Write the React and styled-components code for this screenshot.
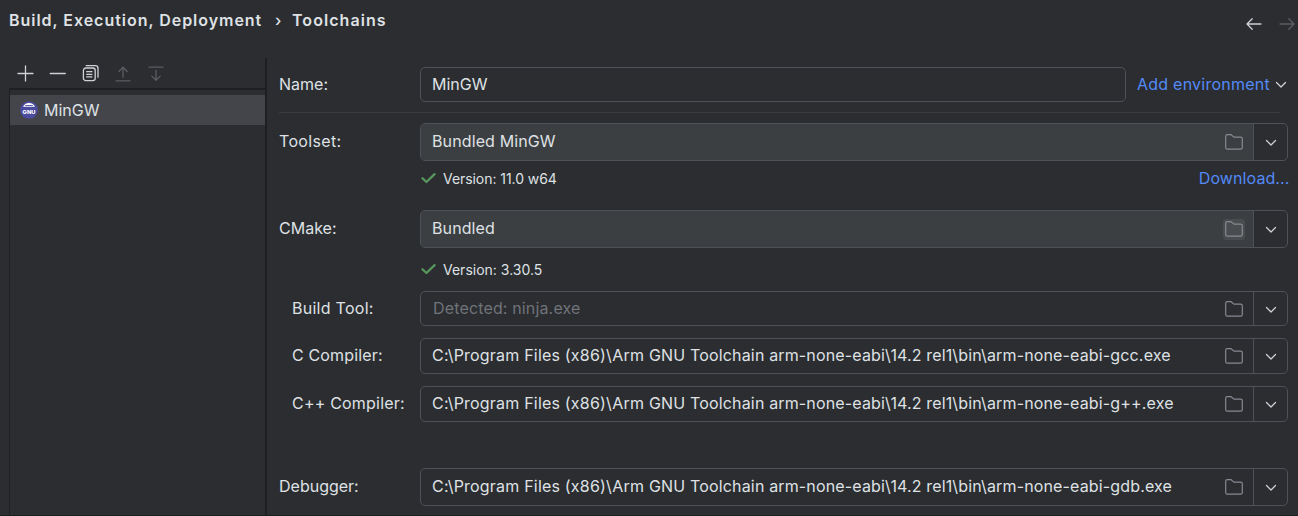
import React from "react";
import styled, { createGlobalStyle } from "styled-components";

const Global = createGlobalStyle`
  *, *::before, *::after { box-sizing: border-box; }
  body { margin: 0; background: #2b2d30; }
`;

const Page = styled.div`
  width: 1298px;
  height: 516px;
  overflow: hidden;
  display: flex;
  flex-direction: column;
  background: #2b2d30;
  color: #dfe1e5;
  font: 400 16px/20px Inter, sans-serif;
  white-space: pre;
  border-bottom: 1px solid #1e1f22;
  svg { display: block; flex: none; }
`;

const Header = styled.header`
  height: 58px;
  flex: none;
  display: flex;
  justify-content: space-between;
  padding: 10px 3px 0 9px;
`;

const Crumbs = styled.div`
  display: flex;
  font-weight: 600;
`;

const Crumb = styled.span`
  letter-spacing: ${(p) => p.$ls || 0}px;
  width: ${(p) => p.$w}px;
`;

const Separator = styled.span`
  width: 17px;
  font-weight: 500;
`;

const Nav = styled.div`
  display: flex;
  gap: 17px;
  padding-top: 6px;
`;

const Body = styled.div`
  flex: 1;
  display: flex;
  min-height: 0;
`;

const Sidebar = styled.aside`
  width: 267px;
  flex: none;
  display: flex;
  flex-direction: column;
  border-right: 2px solid #1e1f22;
  padding-left: 9px;
`;

const Toolbar = styled.div`
  height: 30px;
  flex: none;
  display: flex;
  align-items: center;
  gap: 12.7px;
  padding-left: 6px;
`;

const List = styled.div`
  flex: 1;
  border-top: 2px solid #1e1f22;
  border-left: 1px solid #1e1f22;
  padding-top: 5px;
`;

const ListItem = styled.div`
  height: 30px;
  display: flex;
  align-items: center;
  gap: 6px;
  padding-left: 10px;
  background: #43454a;
`;

const Form = styled.main`
  flex: 1;
  display: flex;
  flex-direction: column;
  padding: 9px 10px 0 12px;
`;

const Row = styled.div`
  display: flex;
  flex: none;
  height: ${(p) => p.$h}px;
  margin-top: ${(p) => p.$mt || 0}px;
`;

const Label = styled.div`
  width: 141px;
  flex: none;
  display: flex;
  align-items: center;
  padding-left: ${(p) => (p.$indent ? 13 : 0)}px;
`;

const Text = styled.span`
  letter-spacing: ${(p) => p.$ls || 0}px;
  padding-bottom: ${(p) => p.$up || 0}px;
`;

const Field = styled.div`
  width: ${(p) => p.$w || 868}px;
  display: flex;
  border: 1px solid #4e5157;
  border-radius: 5px;
  overflow: hidden;
`;

const Value = styled.div`
  flex: 1;
  display: flex;
  align-items: center;
  justify-content: space-between;
  padding: 0 8px 0 ${(p) => (p.$hint ? 12 : 11)}px;
  background: ${(p) => (p.$filled ? "#3c3f41" : "transparent")};
  color: ${(p) => (p.$hint ? "#6f737a" : "inherit")};
`;

const Browse = styled.span`
  width: 22px;
  height: 21px;
  display: flex;
  align-items: center;
  justify-content: center;
  border-radius: 4px;
  background: ${(p) => (p.$hover ? "#4a4d4f" : "transparent")};
`;

const Drop = styled.div`
  width: 34px;
  display: flex;
  align-items: center;
  justify-content: center;
  padding-top: 2px;
  border-left: 1px solid #4e5157;
`;

const Link = styled.div`
  display: flex;
  align-items: center;
  gap: 5px;
  color: #548af7;
  margin-left: ${(p) => p.$ml || 0}px;
`;

const Rule = styled.div`
  flex: none;
  width: 1001px;
  height: 1px;
  margin-top: 10px;
  background: #3b3d41;
`;

const Status = styled(Row)`
  width: 1010.5px;
  padding-left: 142px;
  justify-content: space-between;
  align-items: center;
`;

const Check = styled.div`
  display: flex;
  align-items: center;
  gap: 7px;
  font-size: 14px;
`;

const Chevron = () => (
  <svg width="12" height="8" viewBox="0 0 12 8" fill="none" stroke="#ced0d6" strokeWidth="1.3" strokeLinecap="round" strokeLinejoin="round">
    <path d="M1.5 1.5L6 6L10.5 1.5" />
  </svg>
);

const Folder = () => (
  <svg width="18" height="16" viewBox="0 0 18 16" fill="none" stroke="#868a91" strokeWidth="1.2" strokeLinejoin="round">
    <path d="M.7 2.3Q.7.7 2.3.7H6.1L8.9 3.1H15.7Q17.3 3.1 17.3 4.7V13.5Q17.3 15.1 15.7 15.1H2.3Q.7 15.1.7 13.5Z" />
  </svg>
);

const Tick = () => (
  <svg width="15" height="12" viewBox="0 0 15 12" fill="none" stroke="#57965c" strokeWidth="2.3" strokeLinecap="round" strokeLinejoin="round">
    <path d="M1.5 5.2L5.4 9L13.6 1.2" />
  </svg>
);

const Arrow = ({ color, flip }) => (
  <svg width="16" height="16" viewBox="0 0 16 16" fill="none" stroke={color} strokeWidth="1.3" strokeLinecap="round" strokeLinejoin="round">
    <path d={flip ? "M1 8H15M9.8 2.8L15 8L9.8 13.2" : "M15 8H1M6.2 2.8L1 8L6.2 13.2"} />
  </svg>
);

const ToolIcon = ({ d, color = "#ced0d6", children }) => (
  <svg width="20" height="20" viewBox="0 0 20 20" fill="none" stroke={color} strokeWidth="1.3" strokeLinecap="round" strokeLinejoin="round">
    <path d={d} />
    {children}
  </svg>
);

const Gnu = () => (
  <svg width="18" height="18" viewBox="0 0 18 18">
    <circle cx="9" cy="9" r="8.8" fill="#4b4ba0" />
    <path d="M3 5.8Q4.6 2 9 2Q13.4 2 15 5.8Z" fill="#fff" />
    <path d="M5.2 4.5H12.8" stroke="#4b4ba0" strokeWidth=".9" />
    <text x="9" y="12.9" textAnchor="middle" textLength="12.8" lengthAdjust="spacingAndGlyphs" fontFamily="Inter, sans-serif" fontWeight="800" fontSize="5.4" fill="#fff">GNU</text>
  </svg>
);

function Combo({ children, filled, hint, hover, up, ls }) {
  return (
    <Field>
      <Value $filled={filled} $hint={hint}>
        <Text $ls={ls} $up={up}>{children}</Text>
        <Browse $hover={hover}><Folder /></Browse>
      </Value>
      <Drop><Chevron /></Drop>
    </Field>
  );
}

const ArmTool = ({ exe }) => (
  <>
    <Text $ls={0.2}>{"C:\\Program Files (x86)\\Arm GNU "}</Text>
    <Text $ls={0.148}>{"Toolchain arm-none-eabi\\14.2 rel1\\bin\\arm-none-eabi-" + exe}</Text>
  </>
);

export default function App() {
  return (
    <Page>
      <Global />
      <Header>
        <Crumbs>
          <Crumb $w={266} $ls={0.97}>Build, Execution, Deployment</Crumb>
          <Separator>›</Separator>
          <Crumb $w={120} $ls={1.05}>Toolchains</Crumb>
        </Crumbs>
        <Nav>
          <Arrow color="#ced0d6" />
          <Arrow color="#5a5d63" flip />
        </Nav>
      </Header>
      <Body>
        <Sidebar>
          <Toolbar>
            <ToolIcon d="M3 10.5H18M10.5 3V18" />
            <ToolIcon d="M2.3 10.5H17.3" />
            <ToolIcon d="M6.2 2.6H15.4Q18 2.6 18 5.2V14.2">
              <rect x="3.4" y="5" width="11.8" height="12.6" rx="2.4" />
              <path d="M6.7 8.7H11.9M6.7 11.3H11.9M6.7 13.9H11.9" />
            </ToolIcon>
            <ToolIcon color="#5a5d63" d="M10 14.2V4.3M5.8 8.5L10 4.3L14.2 8.5M3 17.8H17" />
            <ToolIcon color="#5a5d63" d="M10 7.3V17.3M5.8 13.1L10 17.3L14.2 13.1M3 4.2H17" />
          </Toolbar>
          <List>
            <ListItem>
              <Gnu />
              <Text>MinGW</Text>
            </ListItem>
          </List>
        </Sidebar>
        <Form>
          <Row $h={35}>
            <Label><Text $up={1}>Name:</Text></Label>
            <Field $w={706}><Value><Text $up={1}>MinGW</Text></Value></Field>
            <Link $ml={11}><Text $up={1} $ls={0.24}>Add environment</Text><Chevron /></Link>
          </Row>
          <Rule />
          <Row $h={38} $mt={10}>
            <Label><Text $up={2} $ls={0.33}>Toolset:</Text></Label>
            <Combo filled up={2} ls={0.12}>Bundled MinGW</Combo>
          </Row>
          <Status $h={20} $mt={8}>
            <Check><Tick /><Text $ls={-0.06}>Version: 11.0 w64</Text></Check>
            <Link><Text $up={2} $ls={0.1}>Download...</Text></Link>
          </Status>
          <Row $h={38} $mt={21}>
            <Label><Text $up={2}>CMake:</Text></Label>
            <Combo filled hover up={2} ls={0.1}>Bundled</Combo>
          </Row>
          <Status $h={20} $mt={12}>
            <Check><Tick /><Text>Version: 3.30.5</Text></Check>
          </Status>
          <Row $h={35} $mt={11}>
            <Label $indent><Text $up={1} $ls={0.27}>Build Tool:</Text></Label>
            <Combo hint up={1} ls={0.15}>Detected: ninja.exe</Combo>
          </Row>
          <Row $h={36} $mt={12}>
            <Label $indent><Text $up={2} $ls={0.15}>C Compiler:</Text></Label>
            <Combo up={2}><ArmTool exe="gcc.exe" /></Combo>
          </Row>
          <Row $h={36} $mt={12}>
            <Label $indent><Text $up={2} $ls={0.2}>C++ Compiler:</Text></Label>
            <Combo up={2}><ArmTool exe="g++.exe" /></Combo>
          </Row>
          <Row $h={38} $mt={46}>
            <Label><Text $up={2}>Debugger:</Text></Label>
            <Combo up={2}><ArmTool exe="gdb.exe" /></Combo>
          </Row>
        </Form>
      </Body>
    </Page>
  );
}
